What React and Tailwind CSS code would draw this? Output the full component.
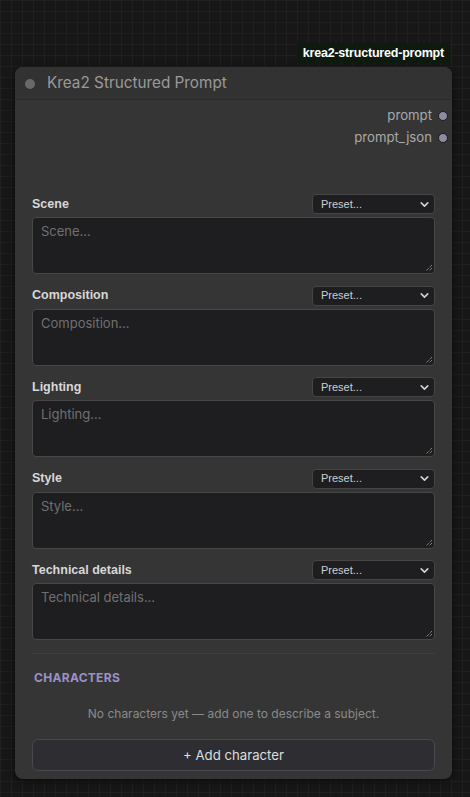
import React from 'react';
import { ChevronDown } from 'lucide-react';

const FIELDS = ['Scene', 'Composition', 'Lighting', 'Style', 'Technical details'];

function Field({ label }) {
  return (
    <div className="flex flex-col">
      <div className="flex items-center justify-between h-[20px]">
        <span className="text-[12.5px] font-bold text-[#d8d8d8] font-['Liberation_Sans',sans-serif]">{label}</span>
        <div className="w-[123px] h-[20px] rounded-[4px] bg-[#1e1e20] border border-[#454545] flex items-center justify-between pl-[8px] pr-[3px]">
          <span className="text-[11px] text-[#cfcfcf] font-['Liberation_Sans',sans-serif]">Preset...</span>
          <ChevronDown size={13} strokeWidth={3} className="text-[#d0d0d0]" />
        </div>
      </div>
      <div className="relative mt-[3px] h-[57px] rounded-[4px] bg-[#1e1e20] border border-[#474747] px-[8px] pt-[7px]">
        <div className="text-[13px] leading-none text-[#707070] font-['Inter',sans-serif]">{label}...</div>
        <svg className="absolute right-[1px] bottom-[1px]" width="8" height="8" viewBox="0 0 8 8">
          <path d="M7 1L1 7M7 4L4 7" stroke="#aaa" strokeWidth="1" strokeDasharray="1 1" />
        </svg>
      </div>
    </div>
  );
}

function Output({ name }) {
  return (
    <div className="flex items-center justify-end h-[22px] pr-[4px]">
      <span className="text-[13.2px] text-[#a9a9a9] font-['Inter',sans-serif]">{name}</span>
      <span className="ml-[6px] w-[10px] h-[10px] rounded-full bg-[#8d8ca3] border border-[#1c1c1c]" />
    </div>
  );
}

export default function App() {
  return (
    <div className="w-[470px] h-[797px] overflow-hidden bg-[#171717] bg-[linear-gradient(to_right,#1f1f1f_1px,transparent_1px),linear-gradient(to_bottom,#1f1f1f_1px,transparent_1px)] bg-[size:11px_11px] font-['Inter',sans-serif]">
      <div className="pt-[43px] pl-[15px] pr-[18px]">
        <div className="flex justify-end pr-[2px]">
          <div className="h-[20px] px-[6px] bg-[#0e1a0e] flex items-center">
            <span className="text-[12.5px] font-bold text-white font-['Liberation_Sans',sans-serif] tracking-[-0.2px]">krea2-structured-prompt</span>
          </div>
        </div>
        <div className="mt-[4px] w-[437px] h-[712px] rounded-[8px] bg-[#353535] shadow-[0_2px_8px_rgba(0,0,0,0.6)] overflow-hidden flex flex-col">
          <div className="h-[33px] pt-[1px] bg-[#323232] border-b border-[#2b2b2b] flex items-center pl-[10px]">
            <span className="w-[10px] h-[10px] rounded-full bg-[#696969]" />
            <span className="ml-[12px] text-[15.3px] text-[#9a9a9a]">Krea2 Structured Prompt</span>
          </div>
          <div className="pt-[5px]">
            <Output name="prompt" />
            <Output name="prompt_json" />
          </div>
          <div className="px-[17px] pt-[45px] flex flex-col gap-[11.5px]">
            {FIELDS.map((f) => (
              <Field key={f} label={f} />
            ))}
          </div>
          <div className="mx-[17px] mt-[13px] border-t border-[#3e3e3e]" />
          <div className="px-[17px]">
            <div className="mt-[15px] pl-[2px] text-[12px] font-bold tracking-[0.3px] text-[#9d90c8]">CHARACTERS</div>
            <div className="mt-[18px] text-center text-[12px] text-[#8a8a8a]">No characters yet — add one to describe a subject.</div>
            <div className="mt-[16px] h-[32px] pt-[2px] rounded-[6px] bg-[#2e2e32] border border-[#48484e] flex items-center justify-center">
              <span className="text-[13.2px] text-[#dedede]">+ Add character</span>
            </div>
          </div>
        </div>
      </div>
    </div>
  );
}
